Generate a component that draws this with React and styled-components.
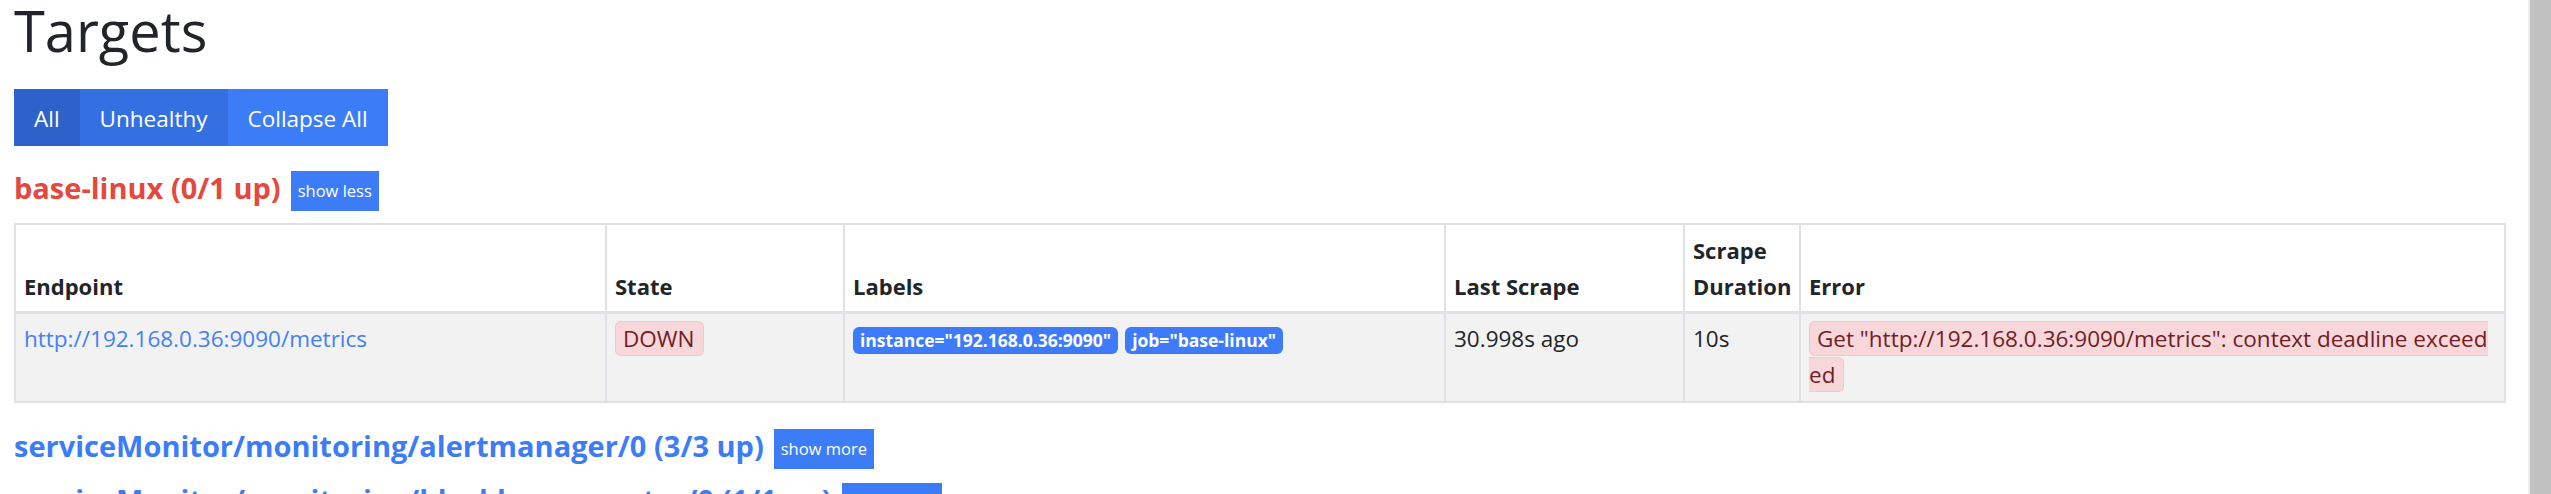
import React from "react";
import styled, { createGlobalStyle } from "styled-components";

// --- Global Style ---
const GlobalStyle = createGlobalStyle`
  html, body { margin: 0; padding: 0; height: 100%; overflow: hidden; background: #ffffff; }
  body { font-family: "Open Sans", "Noto Sans", sans-serif; color: #212529; }
`;

const PRIMARY = "#3d7cf7";
const DANGER = "#e4483e";

// --- Layout ---
const Shell = styled.div`
  display: flex; height: 100vh; overflow: hidden;
`;

const Page = styled.main`
  flex: 1; min-width: 0; padding: 0 24px 0 14px; overflow: hidden;
`;

const ScrollRail = styled.div`
  flex: none; width: 21px; background: #c1c1c1; border-left: 2px solid #ececec;
`;

const Title = styled.h1`
  margin: 0; font-size: 56px; line-height: 60px; font-weight: 500; color: #212529;
`;

// --- Filter toolbar ---
const Toolbar = styled.div`
  display: flex; margin-top: 29px;
`;

const toolbarColors = { active: "#2c62c9", dim: "#3470e2", plain: PRIMARY };

const ToolbarButton = styled.button`
  height: 57px; box-sizing: border-box; padding: 3px 20px 0; line-height: 54px;
  border: 0; border-radius: 0; color: #fff; cursor: pointer;
  font-family: inherit; font-size: 22.5px;
  background: ${(p) => toolbarColors[p.$tone] || PRIMARY};
`;

// --- Scrape pools ---
const Pool = styled.section`
  display: flex; flex-direction: column;
  margin-top: ${(p) => (p.$first ? "25px" : "0")};
  margin-bottom: 14px;
`;

const PoolHeader = styled.div`
  display: flex; align-items: flex-start; gap: 10px;
`;

const PoolTitle = styled.h2`
  margin: 0; font-size: 29px; line-height: 34px; font-weight: 700; white-space: nowrap;
  color: ${(p) => (p.$healthy ? PRIMARY : DANGER)};
`;

const SmallButton = styled.button`
  height: 40px; padding: 0 7px; line-height: 40px; border: 0; border-radius: 0;
  background: ${PRIMARY}; color: #fff; font-family: inherit; font-size: 16.5px;
  white-space: nowrap; cursor: pointer;
`;

const Table = styled.table`
  width: 100%; margin: 12px 0 12px; border-collapse: collapse; table-layout: fixed;
`;

const HeadCell = styled.th`
  text-align: left; vertical-align: bottom; padding: 7px 6px 7px 8px;
  font-size: 22px; line-height: 36px; font-weight: 700; color: #212529;
  border: 2px solid #dee2e6; border-bottom-width: 3px; background: #fff;
`;

const Cell = styled.td`
  vertical-align: top; padding: 7px 8px 8px; font-size: 22.5px; line-height: 36px;
  border: 2px solid #dee2e6; background: #f2f2f2; color: #212529;
`;

const EndpointLink = styled.a`
  color: #4580f5; text-decoration: none;
`;

const Alert = styled.span`
  background: #f8d7da; border: 1px solid #f5c6cb; border-radius: 6px;
  padding: 1px 8px 1px 7px; color: #721c24;
  word-break: ${(p) => (p.$wrap ? "break-all" : "normal")};
`;

const LabelBadge = styled.span`
  display: inline-block; padding: 4.5px 7px; margin-right: 7px; margin-top: 1px;
  font-size: 17.5px; line-height: 18px; font-weight: 700; color: #fff;
  background: #3e7bfa; border-radius: 6px; vertical-align: baseline; white-space: nowrap;
`;

const columns = [
  { key: "endpoint", title: "Endpoint", width: 591 },
  { key: "state", title: "State", width: 238 },
  { key: "labels", title: "Labels", width: 601 },
  { key: "last", title: "Last Scrape", width: 239 },
  { key: "duration", title: "Scrape Duration", width: 116 },
  { key: "error", title: "Error", width: 705 },
];

const pools = [
  {
    name: "base-linux",
    up: 0,
    total: 1,
    expanded: true,
    targets: [
      {
        endpoint: "http://192.168.0.36:9090/metrics",
        state: "DOWN",
        labels: { instance: "192.168.0.36:9090", job: "base-linux" },
        lastScrape: "30.998s ago",
        duration: "10s",
        error: 'Get "http://192.168.0.36:9090/metrics": context deadline exceeded',
      },
    ],
  },
  { name: "serviceMonitor/monitoring/alertmanager/0", up: 3, total: 3, expanded: false },
  { name: "serviceMonitor/monitoring/blackbox-exporter/0", up: 1, total: 1, expanded: false },
];

function TargetsTable({ targets }) {
  return (
    <Table>
      <colgroup>
        {columns.map((c) => (
          <col key={c.key} style={{ width: c.width }} />
        ))}
      </colgroup>
      <thead>
        <tr>
          {columns.map((c) => (
            <HeadCell key={c.key}>{c.title}</HeadCell>
          ))}
        </tr>
      </thead>
      <tbody>
        {targets.map((t) => (
          <tr key={t.endpoint}>
            <Cell>
              <EndpointLink href="#">{t.endpoint}</EndpointLink>
            </Cell>
            <Cell>
              <Alert>{t.state}</Alert>
            </Cell>
            <Cell>
              {Object.entries(t.labels).map(([k, v]) => (
                <LabelBadge key={k}>{`${k}="${v}"`}</LabelBadge>
              ))}
            </Cell>
            <Cell>{t.lastScrape}</Cell>
            <Cell>{t.duration}</Cell>
            <Cell>
              <Alert $wrap>{t.error}</Alert>
            </Cell>
          </tr>
        ))}
      </tbody>
    </Table>
  );
}

export default function App() {
  return (
    <Shell>
      <GlobalStyle />
      <Page>
        <Title>Targets</Title>
        <Toolbar>
          <ToolbarButton $tone="active">All</ToolbarButton>
          <ToolbarButton $tone="dim">Unhealthy</ToolbarButton>
          <ToolbarButton $tone="plain">Collapse All</ToolbarButton>
        </Toolbar>
        {pools.map((pool, i) => (
          <Pool key={pool.name} $first={i === 0}>
            <PoolHeader>
              <PoolTitle $healthy={pool.up === pool.total}>
                {pool.name} ({pool.up}/{pool.total} up)
              </PoolTitle>
              <SmallButton>{pool.expanded ? "show less" : "show more"}</SmallButton>
            </PoolHeader>
            {pool.expanded && <TargetsTable targets={pool.targets} />}
          </Pool>
        ))}
      </Page>
      <ScrollRail />
    </Shell>
  );
}
